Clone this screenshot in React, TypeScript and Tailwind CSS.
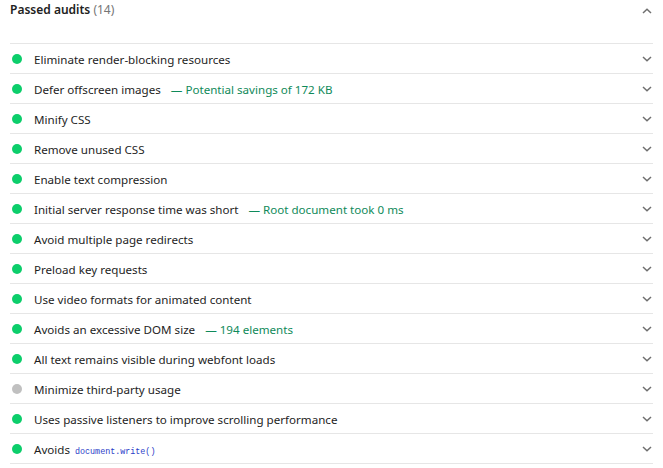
type Audit = {
  title: string;
  detail?: string;
  code?: string;
  grey?: boolean;
};

const audits: Audit[] = [
  { title: 'Eliminate render-blocking resources' },
  { title: 'Defer offscreen images', detail: 'Potential savings of 172 KB' },
  { title: 'Minify CSS' },
  { title: 'Remove unused CSS' },
  { title: 'Enable text compression' },
  { title: 'Initial server response time was short', detail: 'Root document took 0 ms' },
  { title: 'Avoid multiple page redirects' },
  { title: 'Preload key requests' },
  { title: 'Use video formats for animated content' },
  { title: 'Avoids an excessive DOM size', detail: '194 elements' },
  { title: 'All text remains visible during webfont loads' },
  { title: 'Minimize third-party usage', grey: true },
  { title: 'Uses passive listeners to improve scrolling performance' },
  { title: 'Avoids', code: 'document.write()' },
];

function Chevron({ up = false }: { up?: boolean }) {
  return (
    <svg width="10" height="6" viewBox="0 0 10 6" className="shrink-0 text-[#6f6f6f]">
      <polyline
        points={up ? '1,5 5,1.2 9,5' : '1,1 5,4.8 9,1'}
        fill="none"
        stroke="currentColor"
        strokeWidth="1.5"
      />
    </svg>
  );
}

function AuditRow({ audit }: { audit: Audit }) {
  return (
    <div className="flex h-[30px] items-center border-b border-[#e6e6e6] pl-[2px]">
      <span
        className={`h-[10px] w-[10px] shrink-0 rounded-full ${audit.grey ? 'bg-[#c0c0c0]' : 'bg-[#0cce6b]'}`}
      />
      <div className="ml-[12px] flex flex-1 items-baseline pt-[2px] text-[11.6px] text-[#1e1e1e]">
        <span>{audit.title}</span>
        {audit.code && (
          <code className="ml-[5px] font-['Liberation_Mono',monospace] text-[8.4px] text-[#2a3cc8]">
            {audit.code}
          </code>
        )}
        {audit.detail && (
          <span className="ml-[10px] text-[#0f8a5a]">— {audit.detail}</span>
        )}
      </div>
      <span className="mr-[1px]">
        <Chevron />
      </span>
    </div>
  );
}

export default function App() {
  return (
    <div className="h-[468px] w-[663px] bg-white px-[10px] font-['Noto_Sans',sans-serif]">
      <div className="flex h-[44px] items-start justify-between border-b border-[#e6e6e6] pt-[1px]">
        <div className="text-[12px] font-semibold text-[#212121]">
          Passed audits <span className="font-normal text-[#757575]">(14)</span>
        </div>
        <span className="mr-[1px] mt-[7px]">
          <Chevron up />
        </span>
      </div>
      {audits.map((a) => (
        <AuditRow key={a.title} audit={a} />
      ))}
    </div>
  );
}
